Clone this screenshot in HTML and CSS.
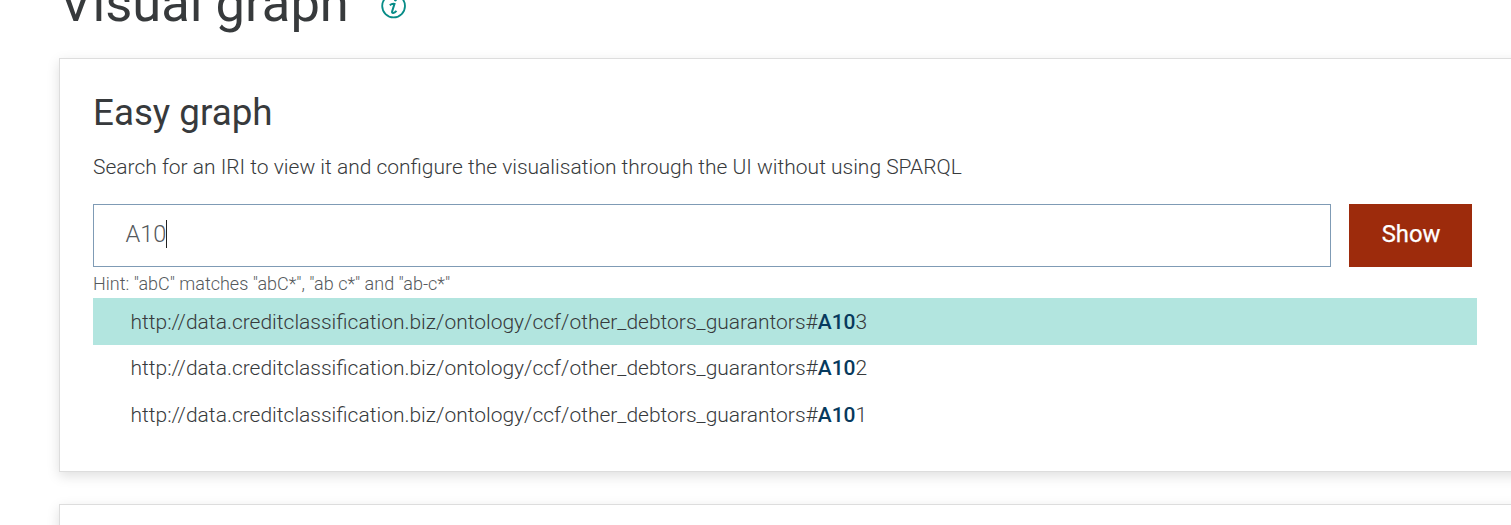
FILE: index.html
```html
<!DOCTYPE html>
<html lang="en">
<head>
<meta charset="utf-8">
<title>Visual graph</title>
<link rel="stylesheet" href="styles.css">
</head>
<body>
<main class="page">
  <header class="heading">
    <h1 class="title">Visual graph</h1>
    <svg class="info" viewBox="0 0 26 26" fill="none" stroke="#078c87" stroke-width="1.8"><circle cx="12.6" cy="13" r="11.4"/><path d="M8.8 12.3c1.5-1.3 3.4-1.7 4.7-1.4l-2.4 7.6c-.5 2.3 2 2 4.4-.6" stroke-width="2"/><circle cx="14.4" cy="6.9" r="1.5" fill="#078c87" stroke="none"/></svg>
  </header>
  <section class="card">
    <h2 class="subtitle">Easy graph</h2>
    <p class="desc">Search for an IRI to view it and configure the visualisation through the UI without using SPARQL</p>
    <div class="search">
      <div class="field"><span>A10</span><i class="caret"></i></div>
      <button class="show">Show</button>
    </div>
    <p class="hint">Hint: "abC" matches "abC*", "ab c*" and "ab-c*"</p>
    <ul class="results">
      <li class="result active"><span>http://data.creditclassification.biz/ontology/ccf/other_debtors_guarantors#<b>A10</b>3</span></li>
      <li class="result"><span>http://data.creditclassification.biz/ontology/ccf/other_debtors_guarantors#<b>A10</b>2</span></li>
      <li class="result"><span>http://data.creditclassification.biz/ontology/ccf/other_debtors_guarantors#<b>A10</b>1</span></li>
    </ul>
  </section>
  <section class="card next"></section>
</main>
</body>
</html>
```
FILE: styles.css
```css
* { box-sizing: border-box; }
body { margin: 0; background: #fff; color: #373a3c; font-family: Roboto, sans-serif; font-weight: 300; }
h1, h2, p, ul { margin: 0; padding: 0; }
.page { height: 525px; overflow: hidden; padding-left: 59px; }
.heading { display: flex; height: 58px; align-items: flex-start; }
.title { font-size: 52.5px; line-height: 64px; font-weight: 400; margin-top: -29px; width: 322px; white-space: nowrap; }
.info { width: 26px; height: 26px; margin-top: -7px; }
.card { height: 414px; width: 1470px; border: 1px solid #ddd; box-shadow: 0 4px 12px rgba(0,0,0,.13); padding: 30px 0 0 33px; }
.next { margin-top: 32px; }
.subtitle { font-size: 36.75px; line-height: 48px; font-weight: 400; white-space: nowrap; }
.desc { font-size: 20.99px; line-height: 30px; margin-top: 15px; white-space: nowrap; }
.search { display: flex; gap: 18px; margin-top: 22px; }
.field { width: 1238px; height: 63px; border: 1px solid #7f9bb5; padding: 0 0 4px 31.5px; display: flex; align-items: center; font-size: 23.6px; color: #55595c; }
.caret { width: 1px; height: 28px; margin-left: -0.5px; background: #222; }
.show { width: 123px; height: 63px; border: 0; padding: 0 0 3px 1px; background: #9d2b0c; color: #fff; font: 400 23.8px Roboto, sans-serif; -webkit-text-stroke: 0.25px #fff; }
.hint { font-size: 18px; line-height: 31px; height: 31px; padding-top: 1px; white-space: nowrap; color: #55595c; }
.results { list-style: none; width: 1384px; }
.result { height: 47px; line-height: 46px; padding: 1px 0 0 37.5px; font-size: 20.99px; white-space: nowrap; }
.result:nth-child(even) { height: 46px; padding-top: 0; }
.active { background: #b2e5df; }
.result b { font-weight: 500; color: #073a5d; }
```
